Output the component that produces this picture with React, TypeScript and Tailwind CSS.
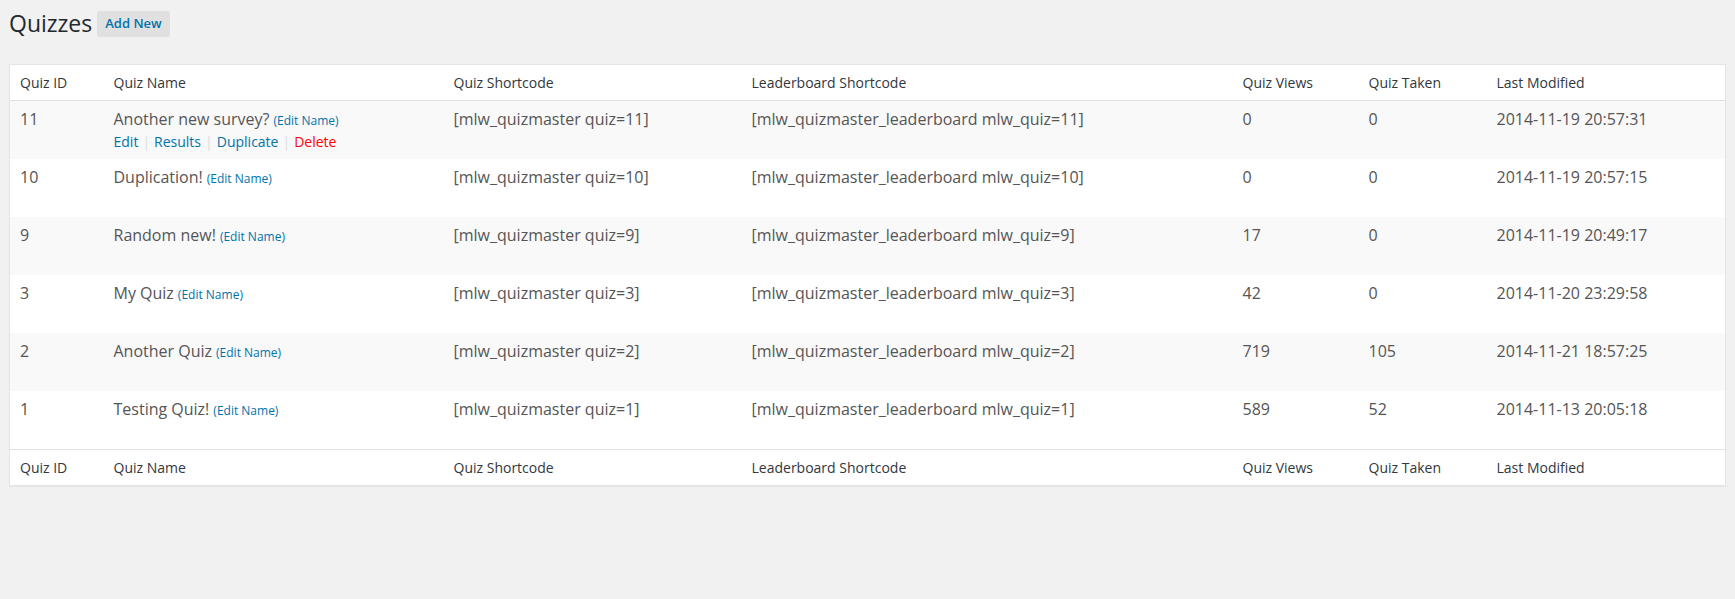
import React from "react";

type Row = {
  id: string;
  name: string;
  views: string;
  taken: string;
  modified: string;
  actions?: boolean;
};

const rows: Row[] = [
  { id: "11", name: "Another new survey?", views: "0", taken: "0", modified: "2014-11-19 20:57:31", actions: true },
  { id: "10", name: "Duplication!", views: "0", taken: "0", modified: "2014-11-19 20:57:15" },
  { id: "9", name: "Random new!", views: "17", taken: "0", modified: "2014-11-19 20:49:17" },
  { id: "3", name: "My Quiz", views: "42", taken: "0", modified: "2014-11-20 23:29:58" },
  { id: "2", name: "Another Quiz", views: "719", taken: "105", modified: "2014-11-21 18:57:25" },
  { id: "1", name: "Testing Quiz!", views: "589", taken: "52", modified: "2014-11-13 20:05:18" },
];

function HeadCells() {
  return (
    <>
      <th className="w-[94px] px-[10px] h-[36px] text-left font-normal text-[14px] text-[#32373c]">Quiz ID</th>
      <th className="w-[340px] px-[10px] text-left font-normal text-[14px] text-[#32373c]">Quiz Name</th>
      <th className="w-[298px] px-[10px] text-left font-normal text-[14px] text-[#32373c]">Quiz Shortcode</th>
      <th className="w-[491px] px-[10px] text-left font-normal text-[14px] text-[#32373c]">Leaderboard Shortcode</th>
      <th className="w-[126px] px-[10px] text-left font-normal text-[14px] text-[#32373c]">Quiz Views</th>
      <th className="w-[128px] px-[10px] text-left font-normal text-[14px] text-[#32373c]">Quiz Taken</th>
      <th className="px-[10px] text-left font-normal text-[14px] text-[#32373c]">Last Modified</th>
    </>
  );
}

const cell = "px-[10px] pt-[9px] align-top text-[16px] leading-[19px] text-[#555] whitespace-nowrap";

export default function App() {
  return (
    <div className="min-h-[599px] bg-[#f1f1f1] px-[9px] pt-[9px] pb-10 font-['Open_Sans',sans-serif]">
      <div className="flex h-[29px] items-center">
        <h2 className="text-[23px] leading-[29px] font-normal text-[#23282d]">Quizzes</h2>
        <a className="ml-[5px] flex h-[26px] items-center rounded-[2px] bg-[#e0e0e0] px-[8px] text-[13px] font-semibold text-[#0073aa]">
          Add New
        </a>
      </div>
      <table className="mt-[26px] w-full table-fixed border border-[#e5e5e5] bg-white shadow-[0_1px_1px_rgba(0,0,0,0.04)]">
        <thead>
          <tr className="border-b border-[#e1e1e1]">
            <HeadCells />
          </tr>
        </thead>
        <tbody>
          {rows.map((r, i) => (
            <tr key={r.id} className={`h-[58px] ${i % 2 === 0 ? "bg-[#f9f9f9]" : "bg-white"}`}>
              <td className={cell}>{r.id}</td>
              <td className="px-[10px] pt-[9px] pb-[7px] align-top text-[16px] text-[#555] whitespace-nowrap">
                <div className="flex h-[19px] items-baseline leading-[19px]">
                  <span>{r.name}</span>
                  <a className="ml-[4px] text-[12px] leading-[12px] text-[#0073aa]">(Edit Name)</a>
                </div>
                <div className={`flex h-[23px] items-center pt-[2px] text-[14px] leading-[21px] ${r.actions ? "" : "invisible"}`}>
                  <a className="text-[#0073aa]">Edit</a>
                  <span className="mx-[4px] text-[#ddd]">|</span>
                  <a className="text-[#0073aa]">Results</a>
                  <span className="mx-[4px] text-[#ddd]">|</span>
                  <a className="text-[#0073aa]">Duplicate</a>
                  <span className="mx-[4px] text-[#ddd]">|</span>
                  <a className="text-[#ff0000]">Delete</a>
                </div>
              </td>
              <td className={cell}>[mlw_quizmaster quiz={r.id}]</td>
              <td className={cell}>[mlw_quizmaster_leaderboard mlw_quiz={r.id}]</td>
              <td className={cell}>{r.views}</td>
              <td className={cell}>{r.taken}</td>
              <td className={cell}>{r.modified}</td>
            </tr>
          ))}
        </tbody>
        <tfoot>
          <tr className="border-t border-[#e1e1e1]">
            <HeadCells />
          </tr>
        </tfoot>
      </table>
    </div>
  );
}
